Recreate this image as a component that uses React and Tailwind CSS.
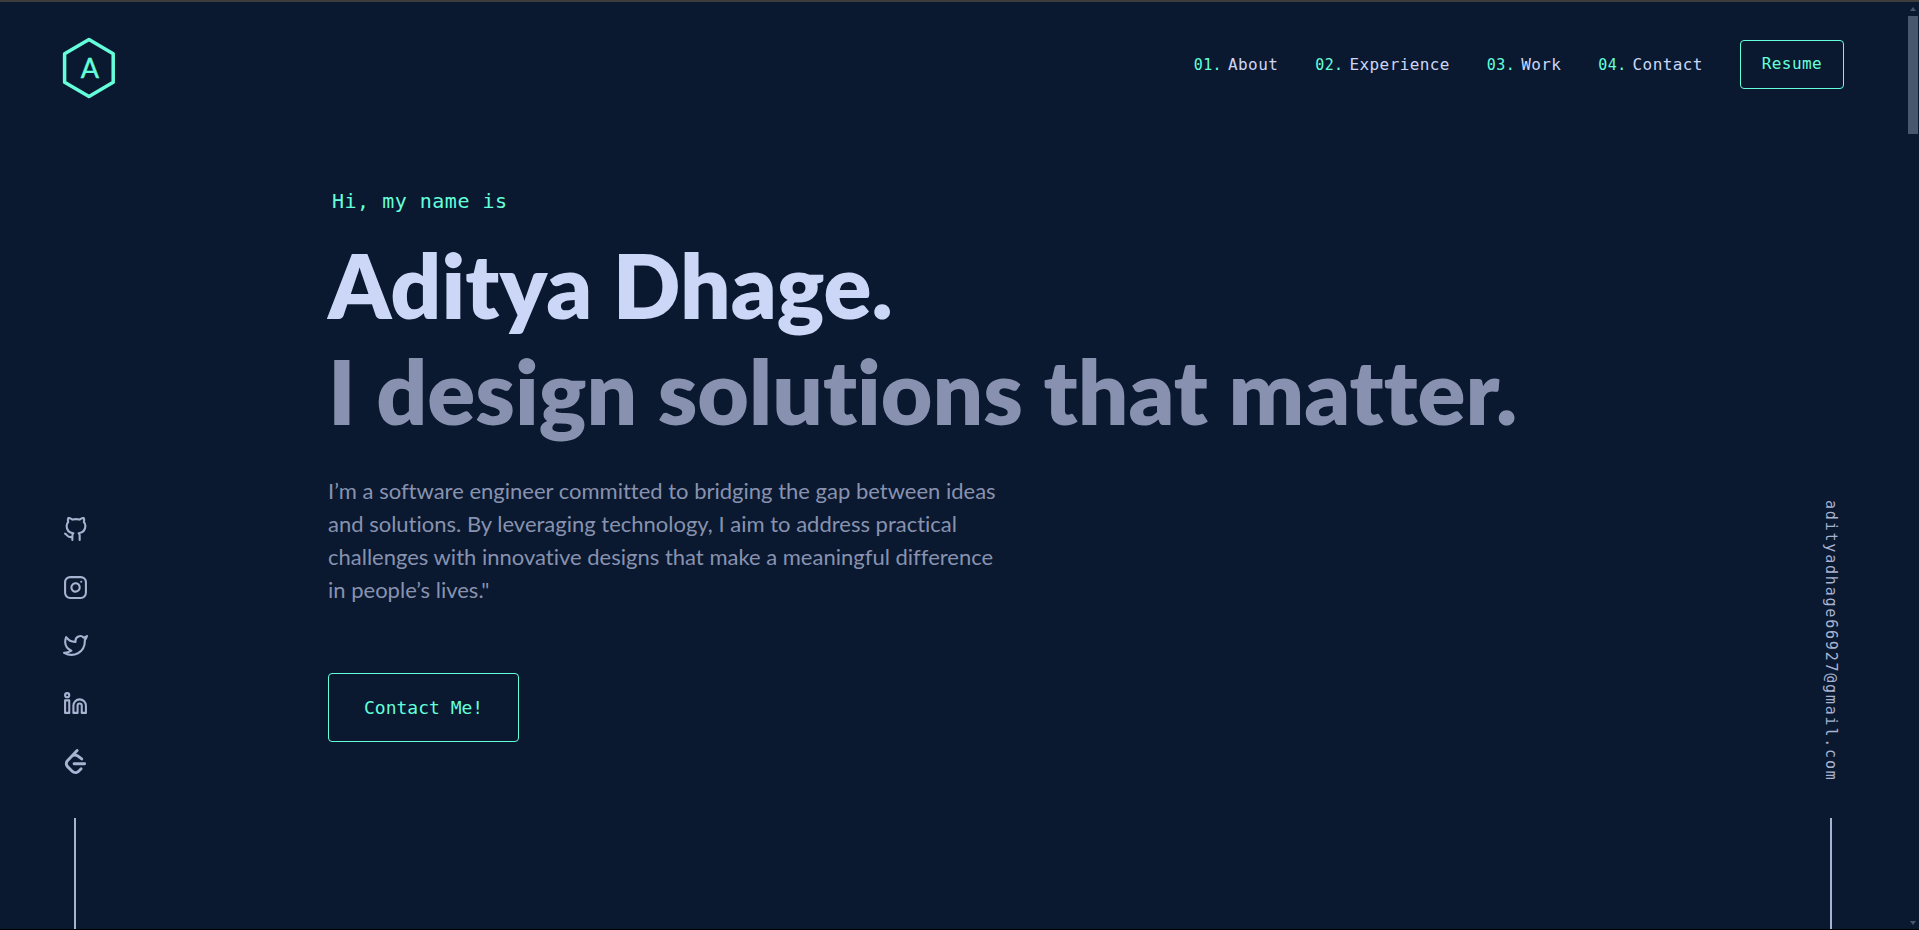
import { FiGithub, FiInstagram, FiTwitter, FiLinkedin } from 'react-icons/fi';
import { SiLeetcode } from 'react-icons/si';

const navLinks = ['About', 'Experience', 'Work', 'Contact'];

const socials = [
  { label: 'GitHub', Icon: FiGithub },
  { label: 'Instagram', Icon: FiInstagram },
  { label: 'Twitter', Icon: FiTwitter },
  { label: 'LinkedIn', Icon: FiLinkedin },
  { label: 'LeetCode', Icon: SiLeetcode },
];

function Logo() {
  return (
    <svg width="54" height="62" viewBox="0 0 54 62" fill="none" role="img" aria-label="Logo">
      <path
        d="M27 2.6 51.2 16.8V45.2L27 59.4 2.6 45.2V16.8Z"
        stroke="#64ffda"
        strokeWidth="3.5"
        strokeLinejoin="round"
      />
      <text
        x="28"
        y="41"
        textAnchor="middle"
        fill="#64ffda"
        stroke="#64ffda"
        strokeWidth="0.4"
        className="font-['Lato',sans-serif] text-[27px]"
      >
        A
      </text>
    </svg>
  );
}

function Header() {
  return (
    <header className="flex items-start justify-between pt-[35px] pr-16 pl-[62px]">
      <a href="#home">
        <Logo />
      </a>
      <nav className="flex items-center gap-[37px] pt-[3px] font-['DejaVu_Sans_Mono',monospace] tracking-wide">
        {navLinks.map((name, i) => (
          <a key={name} href={`#${name.toLowerCase()}`} className="flex items-baseline gap-1.5 text-base text-[#ccd6f6]">
            <span className="text-[15px] text-[#64ffda]">{`0${i + 1}.`}</span>
            {name}
          </a>
        ))}
        <a href="#resume" className="rounded border border-[#64ffda] px-[21px] pt-[11px] pb-3 text-base text-[#64ffda]">
          Resume
        </a>
      </nav>
    </header>
  );
}

function Socials() {
  return (
    <aside className="flex w-[26px] shrink-0 flex-col items-center justify-end gap-11 text-[#a8b2d1]">
      <ul className="flex flex-col gap-[33px]">
        {socials.map(({ label, Icon }) => (
          <li key={label}>
            <a href={`#${label.toLowerCase()}`} aria-label={label} className="block">
              <Icon size={25} />
            </a>
          </li>
        ))}
      </ul>
      <div className="h-[111px] w-0.5 bg-[#a8b2d1]" />
    </aside>
  );
}

function Email() {
  return (
    <aside className="flex w-[26px] shrink-0 flex-col items-center justify-end gap-9 text-[#a8b2d1]">
      <a
        href="mailto:adityadhage66927@gmail.com"
        className="font-['DejaVu_Sans_Mono',monospace] text-[15px] leading-6 tracking-[0.12em] [writing-mode:vertical-rl]"
      >
        adityadhage66927@gmail.com
      </a>
      <div className="h-[111px] w-0.5 bg-[#a8b2d1]" />
    </aside>
  );
}

function Hero() {
  return (
    <section className="flex-1 pt-[88px] pl-60 font-['Lato',sans-serif]">
      <p className="pl-1 font-['DejaVu_Sans_Mono',monospace] text-xl tracking-wide text-[#64ffda]">Hi, my name is</p>
      <div className="mt-[17px] text-[89px] leading-[106px] font-extrabold [font-variant-ligatures:none]">
        <h1 className="text-[#ccd6f6]">Aditya Dhage.</h1>
        <h2 className="text-[#8892b0]">I design solutions that matter.</h2>
      </div>
      <p className="mt-[30px] max-w-[675px] text-[22px] leading-[33px] text-[#8892b0] [font-variant-ligatures:none]">
        I’m a software engineer committed to bridging the gap between ideas and solutions. By leveraging technology, I
        aim to address practical challenges with innovative designs that make a meaningful difference in people’s
        lives."
      </p>
      <button
        type="button"
        className="mt-[67px] rounded border border-[#64ffda] px-[35px] pt-5 pb-[19px] font-['DejaVu_Sans_Mono',monospace] text-lg text-[#64ffda]"
      >
        Contact Me!
      </button>
    </section>
  );
}

function Scrollbar() {
  return (
    <div className="flex w-[11px] shrink-0 flex-col items-center pt-[5px] pr-px pb-1 text-[#495670]" aria-hidden="true">
      <svg width="6" height="4" viewBox="0 0 6 4" fill="currentColor">
        <path d="M0 4 3 0 6 4Z" />
      </svg>
      <div className="mt-[5px] h-[118px] w-2.5 bg-[#495670]" />
      <svg className="mt-auto" width="6" height="4" viewBox="0 0 6 4" fill="currentColor">
        <path d="M0 0 3 4 6 0Z" />
      </svg>
    </div>
  );
}

export default function App() {
  return (
    <div className="flex min-h-screen border-t-2 border-b border-t-[#3c3c3c] border-b-black bg-[#0a192f]">
      <div className="flex flex-1 flex-col">
        <Header />
        <main className="flex flex-1 pr-16 pl-[62px]">
          <Socials />
          <Hero />
          <Email />
        </main>
      </div>
      <Scrollbar />
    </div>
  );
}
